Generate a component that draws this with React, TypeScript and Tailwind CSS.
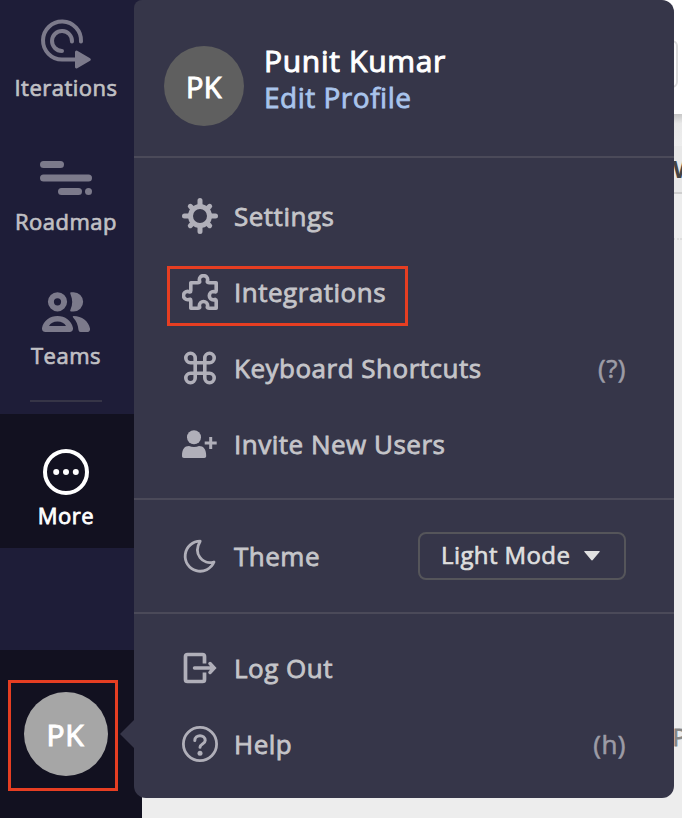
import type { ReactNode } from "react";

function IterationsIcon() {
  return (
    <svg className="block" width="52" height="52" viewBox="0 0 52 52" fill="none" stroke="#7c7a8b" strokeWidth="4" strokeLinecap="round">
      <path d="M41 22.5A19 19 0 1 0 22 40.5H36" />
      <path d="M32 22.5A10 10 0 1 0 22 32" />
      <path d="M36.500 33 49.300 40.500 36.500 48Z" fill="#7c7a8b" strokeWidth="3" strokeLinejoin="round" />
    </svg>
  );
}

function RoadmapIcon() {
  return (
    <svg className="block" width="52" height="36" viewBox="0 0 52 36" fill="#7c7a8b">
      <rect x="0" y="0" width="24" height="7" rx="3.5" />
      <rect x="0" y="13.500" width="52" height="7" rx="3.5" />
      <rect x="18" y="27" width="24" height="7" rx="3.5" />
      <circle cx="48.5" cy="30.500" r="3.5" />
    </svg>
  );
}

function TeamsIcon() {
  return (
    <svg className="-mt-[2px] block" width="48" height="40" viewBox="0 0 48 40" fill="#7c7a8b">
      <circle cx="15.5" cy="9.8" r="6.6" fill="none" stroke="#7c7a8b" strokeWidth="6" />
      <path d="M29 .2h2.500a9.6 9.6 0 0 1 0 19.3H29Q27.500 19.500 28.500 17.500C30.800 12.500 30.800 7.500 28.500 2.200Q27.500 .2 29 .2Z" />
      <path fillRule="evenodd" d="M0 36C1.500 28.500 8 24 15.500 24S29.500 28.500 31 36C31.200 38.500 30 40 27.500 40H3.500C1 40-.2 38.500 0 36ZM7 34H24C22.500 31 19.500 29.500 15.500 29.500S8.500 31 7 34Z" />
      <path d="M31.500 24C40 24 46.500 29 48 36.500C48.300 38.800 47 40 45 40H38.500Q36.700 40 36.500 38C36 33 34.500 29 31.500 26Q30 24 31.500 24Z" />
    </svg>
  );
}

function MoreIcon() {
  return (
    <svg className="block" width="46" height="46" viewBox="0 0 46 46" fill="#fff">
      <circle cx="23" cy="23" r="21" fill="none" stroke="#fff" strokeWidth="4" />
      <circle cx="13.200" cy="23" r="3" />
      <circle cx="23" cy="23" r="3" />
      <circle cx="32.800" cy="23" r="3" />
    </svg>
  );
}

const icons: Record<string, ReactNode> = {
  settings: (
    <>
      <circle cx="18" cy="18" r="9.500" strokeWidth="5" />
      <path strokeWidth="5" d="M18 2.500V7M18 29V33.500M2.500 18H7M29 18H33.500M8.300 8.300 10.500 10.500M25.500 25.500 27.700 27.700M27.700 8.300 25.500 10.500M10.500 25.500 8.300 27.700" />
    </>
  ),
  puzzle: (
    <path
      strokeWidth="3.600"
      strokeLinejoin="round"
      d="M8.800 8.800H16C18.800 8.800 17.300 7 17.300 5.800A4.200 4.200 0 0 1 25.700 5.800C25.700 7 24.200 8.800 27 8.800H34.200V16.700C34.200 19 32 17.500 31.500 17.500A4.200 4.200 0 0 0 31.500 25.900C32 25.900 34.200 24.400 34.200 26.700V34.200H27C24.200 34.200 25.700 32.500 25.700 31.700A4.200 4.200 0 0 0 17.300 31.700C17.300 32.500 18.800 34.200 16 34.200H8.800V26.700C8.800 24.200 7 25.800 5.700 25.800A4.200 4.200 0 0 1 5.700 17.400C7 17.400 8.800 19 8.800 16.500Z"
    />
  ),
  command: (
    <path
      strokeWidth="3.600"
      d="M12.700 12.700H8.500A4.700 4.700 0 1 1 13.200 8V28A4.700 4.700 0 1 1 8.500 23.300H27.500A4.700 4.700 0 1 1 22.800 28V8A4.700 4.700 0 1 1 27.500 12.700H12.700"
    />
  ),
  invite: (
    <>
      <g fill="#b0afb9" stroke="none">
        <circle cx="12" cy="11.300" r="7" />
        <path d="M0 30C0 23 2.500 20 7 20C10 21.300 14 21.300 17 20C21.500 20 24.200 23 24.200 30C24.200 31.300 23.500 32 22.200 32H2C.7 32 0 31.300 0 30Z" />
      </g>
      <path strokeWidth="3" strokeLinecap="butt" d="M28.700 11V23M22.700 17H34.700" />
    </>
  ),
  moon: (
    <path
      strokeWidth="2.800"
      strokeLinejoin="round"
      d="M18.200 3.200A15 15 0 1 0 32 24C21 27.500 10.500 16 18.200 3.200Z"
    />
  ),
  logout: (
    <>
      <path strokeWidth="3.700" strokeLinecap="butt" strokeLinejoin="round" d="M22.500 13.500V6.500Q22.500 4.500 20.500 4.500H5.500Q3.500 4.500 3.500 6.500V29.500Q3.500 31.500 5.500 31.500H20.500Q22.500 31.500 22.500 29.500V22.500" />
      <path strokeWidth="3.500" d="M12.500 18H31M28 13.500 32.200 18 28 22.500" />
    </>
  ),
  help: (
    <>
      <circle cx="18" cy="18" r="16.600" strokeWidth="2.800" />
      <path strokeWidth="3" d="M12.800 14.500C12.800 8.200 23.200 8.200 23.200 14.500C23.200 18 18 18 18 21.200" />
      <circle cx="18" cy="27.200" r="2.500" fill="#b0afb9" stroke="none" />
    </>
  ),
};

function MenuRow({ icon, label, hint }: { icon: string; label: string; hint?: string }) {
  return (
    <div className="flex h-[76px] items-center pr-12 pl-12">
      <svg className="mr-4 block shrink-0" width="36" height="36" viewBox="0 0 36 36" fill="none" stroke="#b0afb9" strokeLinecap="round">
        {icons[icon]}
      </svg>
      <span className="text-[26px] leading-9 tracking-[0.5px] text-[#c5c5c9] [-webkit-text-stroke:0.8px_#c5c5c9]">{label}</span>
      {hint && (
        <span className="ml-auto text-[26px] leading-9 tracking-[0.48px] text-[#9d9ca6] [-webkit-text-stroke:0.6px_#9d9ca6]">{hint}</span>
      )}
    </div>
  );
}

function NavItem({ icon, label }: { icon: ReactNode; label: string }) {
  return (
    <div className="flex h-[134px] w-[132px] flex-col items-center">
      <div className="flex h-[52px] items-center">{icon}</div>
      <span className="mt-px text-[22px] leading-[30px] tracking-[0.5px] text-[#c0c0c4] [-webkit-text-stroke:0.7px_#c0c0c4]">{label}</span>
    </div>
  );
}

export default function App() {
  return (
    <div className="relative flex h-[818px] w-[682px] overflow-hidden bg-[#ededed] font-['Open_Sans','Noto_Sans',sans-serif]">
      <aside className="flex w-[142px] shrink-0 flex-col bg-[#1e1d38]">
        <nav className="h-[414px] pt-[19px]">
          <NavItem icon={<IterationsIcon />} label="Iterations" />
          <NavItem icon={<RoadmapIcon />} label="Roadmap" />
          <div className="h-[113px]">
            <NavItem icon={<TeamsIcon />} label="Teams" />
          </div>
          <div className="ml-[30px] h-[2px] w-[72px] bg-[#363547]" />
        </nav>
        <div className="flex h-[134px] w-full flex-col items-center bg-[#121120] pt-[35px] pr-[10px]">
          <MoreIcon />
          <span className="mt-[5px] text-[22px] leading-[30px] tracking-[0.5px] text-white [-webkit-text-stroke:0.8px_#fff]">More</span>
        </div>
        <div className="h-[102px]" />
        <div className="flex-1 bg-[#121120] pt-[30px] pl-2">
          <div className="h-[111px] w-[110px] border-[3px] border-[#e63e22] pt-[9px] pl-[13px]">
            <div className="flex h-[84px] w-[84px] items-center justify-center rounded-full bg-[#a6a6a6] pt-px pr-px text-[30px] tracking-[0.8px] text-white [-webkit-text-stroke:1.1px_#fff]">
              PK
            </div>
          </div>
        </div>
      </aside>

      <main className="flex flex-1 flex-col items-end">
        <div className="flex h-[114px] w-full justify-end bg-white pt-10 pr-1">
          <div className="h-12 w-40 rounded-md border-2 border-[#dedede]" />
        </div>
        <div className="h-8 w-full bg-linear-to-b from-[#c8c8c8] via-[#e9e9e9] via-30% to-[#ededed]" />
        <div className="flex h-12 w-full justify-end overflow-hidden border-b-2 border-[#cfcfcf] bg-[#e8e8e8]">
          <span className="mr-[-14px] text-[24px] leading-[46px] font-bold text-[#444]">W</span>
        </div>
        <div className="h-[46px] w-full border-b-2 border-dotted border-[#dddddd]" />
        <div className="mt-[480px] mr-[-5px] text-[24px] leading-[34px] text-[#858585] [-webkit-text-stroke:0.8px_#858585]">P</div>
      </main>

      <div className="absolute top-0 left-[134px] h-[798px] w-[540px] rounded-xl rounded-tl-lg bg-[#363649]">
        <div className="absolute top-[720px] left-[-14px] h-7 w-[14px] bg-[#363649] [clip-path:polygon(100%_0,0_50%,100%_100%)]" />
        <header className="flex h-[158px] border-b-2 border-[#4b4a59] pt-[46px] pl-[30px]">
          <div className="flex h-20 w-20 items-center justify-center rounded-full bg-[#5f5f5f] pt-[2px] text-[29px] tracking-[0.5px] text-white [-webkit-text-stroke:1px_#fff]">PK</div>
          <div className="ml-5 flex flex-col">
            <span className="mt-[-4px] text-[30px] leading-[38px] tracking-[0.7px] text-white [-webkit-text-stroke:1px_#fff]">Punit Kumar</span>
            <span className="mt-[-1px] text-[28px] leading-9 tracking-[0.5px] text-[#a9c4ec] [-webkit-text-stroke:0.8px_#a9c4ec]">Edit Profile</span>
          </div>
        </header>
        <section className="h-[342px] border-b-2 border-[#4b4a59] pt-5">
          <MenuRow icon="settings" label="Settings" />
          <div className="relative">
            <MenuRow icon="puzzle" label="Integrations" />
            <div className="absolute top-[11.500px] left-[33px] h-[60px] w-[241px] border-[3px] border-[#e63e22]" />
          </div>
          <MenuRow icon="command" label="Keyboard Shortcuts" hint="(?)" />
          <MenuRow icon="invite" label="Invite New Users" />
        </section>
        <section className="flex h-[114px] items-center justify-between border-b-2 border-[#4b4a59] pr-12">
          <MenuRow icon="moon" label="Theme" />
          <div className="flex h-12 w-52 items-center rounded-lg border-2 border-[#55555a] pl-[21px]">
            <span className="mt-[-2px] text-[24px] leading-8 tracking-[0.4px] text-[#dedede] [-webkit-text-stroke:0.7px_#dedede]">Light Mode</span>
            <svg className="ml-[14px]" width="16" height="10" viewBox="0 0 16 10" fill="#e2e2e2">
              <path d="M1 0H15Q16.500 0 15.500 1L9 8.800Q8 10 7 8.800L.5 1Q-.5 0 1 0Z" />
            </svg>
          </div>
        </section>
        <section className="pt-4">
          <MenuRow icon="logout" label="Log Out" />
          <MenuRow icon="help" label="Help" hint="(h)" />
        </section>
      </div>
    </div>
  );
}
